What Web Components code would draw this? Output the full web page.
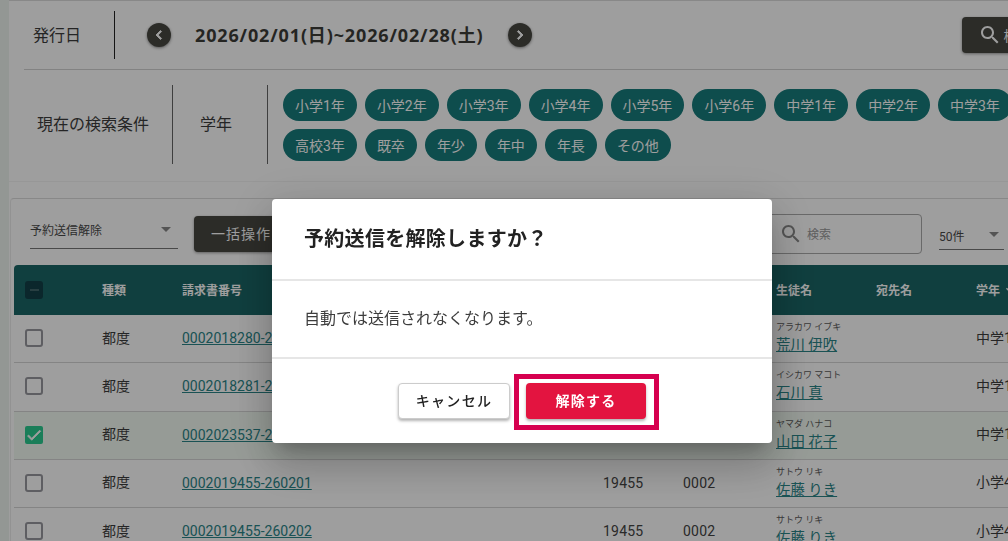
<!DOCTYPE html>
<html lang="ja"><head><meta charset="utf-8"><title>予約送信解除</title>
<style>
html,body{margin:0;height:541px;overflow:hidden;background:#eef4ef;font-family:Roboto,"Noto Sans CJK JP",sans-serif;color:#3d3d3d}
</style></head><body>
<app-page>
  <filter-card>
    <date-bar slot="date" label="発行日" range="2026/02/01(日)~2026/02/28(土)"></date-bar>
    <span slot="cond-label">現在の検索条件</span>
    <span slot="cond-name">学年</span>
    <filter-chip>小学1年</filter-chip><filter-chip>小学2年</filter-chip><filter-chip>小学3年</filter-chip><filter-chip>小学4年</filter-chip><filter-chip>小学5年</filter-chip><filter-chip>小学6年</filter-chip><filter-chip>中学1年</filter-chip><filter-chip>中学2年</filter-chip><filter-chip>中学3年</filter-chip><filter-chip>高校1年</filter-chip><filter-chip>高校2年</filter-chip><filter-chip>高校3年</filter-chip><filter-chip>既卒</filter-chip><filter-chip>年少</filter-chip><filter-chip>年中</filter-chip><filter-chip>年長</filter-chip><filter-chip>その他</filter-chip>
  </filter-card>
  <list-card>
    <list-toolbar></list-toolbar>
    <table-head></table-head>
    <data-row kind="都度" inv="0002018280-260201" kana="アラカワ イブキ" name="荒川 伊吹" grade="中学1年"></data-row>
    <data-row kind="都度" inv="0002018281-260201" kana="イシカワ マコト" name="石川 真" grade="中学1年"></data-row>
    <data-row selected kind="都度" inv="0002023537-260201" kana="ヤマダ ハナコ" name="山田 花子" grade="中学1年"></data-row>
    <data-row kind="都度" inv="0002019455-260201" no="19455" branch="0002" kana="サトウ リキ" name="佐藤 りき" grade="小学4年"></data-row>
    <data-row kind="都度" inv="0002019455-260202" no="19455" branch="0002" kana="サトウ リキ" name="佐藤 りき" grade="小学4年"></data-row>
  </list-card>
</app-page>
<modal-dialog heading="予約送信を解除しますか？">
  自動では送信されなくなります。
  <action-button slot="actions">キャンセル</action-button>
  <action-button slot="actions" danger highlighted>解除する</action-button>
</modal-dialog>
<script>
const ICON={
 search:'M15.5 14h-.79l-.28-.27C15.41 12.59 16 11.11 16 9.5 16 5.91 13.09 3 9.5 3S3 5.91 3 9.5 5.91 16 9.5 16c1.61 0 3.09-.59 4.23-1.57l.27.28v.79l5 4.99L20.49 19l-4.99-5zm-6 0C7.01 14 5 11.99 5 9.5S7.01 5 9.5 5 14 7.01 14 9.5 11.99 14 9.5 14z',
 left:'M15.41 7.41L14 6l-6 6 6 6 1.41-1.41L10.83 12z',
 right:'M10 6L8.59 7.41 13.17 12l-4.58 4.59L10 18l6-6z',
 down:'M16.59 8.59L12 13.17 7.41 8.59 6 10l6 6 6-6z'
};
const svg=(n,s,c,sw)=>`<svg width="${s}" height="${s}" viewBox="0 0 24 24" fill="${c}" style="display:block"><path d="${ICON[n]}"${sw?` stroke="${c}" stroke-width="${sw}"`:''}/></svg>`;
class Base extends HTMLElement{
  connectedCallback(){ if(!this.shadowRoot){this.attachShadow({mode:'open'}).innerHTML=this.render();} }
  a(n){return this.getAttribute(n)||''}
}
const def=(tag,fn)=>customElements.define(tag,class extends Base{render(){return fn(this)}});

def('app-page',()=>`<style>:host{display:block;box-sizing:border-box;width:1008px;height:541px;overflow:hidden;padding-left:9px}
.w{width:1400px;height:541px;background:#fff}</style><div class="w"><slot></slot></div>`);

def('filter-card',()=>`<style>
:host{display:block;box-sizing:border-box;width:1400px;height:182px;background:#fff;border-top:1px solid #dcdcdc;border-bottom:1px solid #f4f4f4}
.date{height:68px}
.cond{display:flex;align-items:center;margin-left:15px;border-top:1px solid #d2d2d2;height:111px;padding-bottom:1px;box-sizing:border-box}
.lab{box-sizing:border-box;height:79px;display:flex;align-items:center;font-size:16px;padding-bottom:3px}
.l1{width:148px;padding-left:13px}
.l2{width:95px;padding-left:27px;border-left:1px solid #666}
.chips{box-sizing:border-box;border-left:1px solid #666;height:79px;padding-left:15px;width:930px;display:flex;flex-wrap:wrap;gap:8px;align-content:center}
</style>
<div class="date"><slot name="date"></slot></div>
<div class="cond"><div class="lab l1"><slot name="cond-label"></slot></div><div class="lab l2"><slot name="cond-name"></slot></div><div class="chips"><slot></slot></div></div>`);

def('date-bar',e=>`<style>
:host{display:flex;align-items:center;height:68px;font-size:16px}
.l{box-sizing:border-box;width:106px;height:48px;padding:0 0 3px 24px;display:flex;align-items:center;border-right:1px solid #222}
.c{box-sizing:border-box;width:24px;height:24px;border-radius:50%;background:#484842;display:flex;align-items:center;justify-content:center;box-shadow:0 1px 3px rgba(0,0,0,.45)}
.p{margin-left:32px}
.r{font:700 18px/1 "Noto Sans","Noto Sans CJK JP",sans-serif;letter-spacing:.86px;margin:0 24px;color:#3c3c38;white-space:nowrap}
.s{margin-left:430px;width:110px;height:36px;box-sizing:border-box;border-radius:4px;background:#484842;display:flex;align-items:center;padding-left:16px;gap:2px;color:#fff;font-size:14px;box-shadow:0 1px 3px rgba(0,0,0,.4)}
</style><div class="l">${e.a('label')}</div>
<div class="c p">${svg('left',18,'#fff',1.2)}</div><div class="r">${e.a('range')}</div><div class="c">${svg('right',18,'#fff',1.2)}</div>
<div class="s">${svg('search',24,'#fff')}<span>検索</span></div>`);

def('filter-chip',()=>`<style>
:host{display:inline-flex;align-items:center;height:32px;padding:0 12px;border-radius:16px;background:#187c7c;color:#fff;font-size:14px;white-space:nowrap}
</style><slot></slot>`);

def('list-card',()=>`<style>
:host{display:block;box-sizing:border-box;width:1390px;height:400px;margin:16px 0 0 1px;background:#fff;border-top:1px solid #dcdcdc;border-left:1px solid #ececec;border-radius:4px 0 0 0}
</style><slot></slot>`);

def('list-toolbar',()=>`<style>
:host{display:flex;align-items:flex-start;height:66px;padding-left:19px;font-size:12px}
.sel{box-sizing:border-box;border-bottom:1px solid #777;display:flex;align-items:center;justify-content:space-between;color:#4a4a4a}
.a{width:148px;height:29px;margin-top:21px;padding-bottom:9px}
.btn{margin:17px 0 0 16px;box-sizing:border-box;width:96px;height:36px;border-radius:4px;background:#484842;color:#fff;font-size:14px;letter-spacing:1px;display:flex;align-items:center;padding:0 0 2px 17px;box-shadow:0 1px 3px rgba(0,0,0,.4)}
.search{box-sizing:border-box;margin:15px 0 0 472px;width:160px;height:40px;border:1px solid #aaa;border-radius:4px;display:flex;align-items:center;padding:0 0 1px 19px;gap:4px;color:#999}
.b{width:65px;height:27px;margin:24px 0 0 17px;padding-bottom:2px;align-items:center}
.tri{width:0;height:0;border:5px solid transparent;border-top-color:#888;border-bottom:0;margin-right:7px}
.b .tri{margin-right:5px;margin-top:-1px}
</style>
<div class="sel a"><span>予約送信解除</span><span class="tri"></span></div>
<div class="btn">一括操作</div>
<div class="search">${svg('search',24,'#888').replace('display:block','display:block;margin-left:-3px')}<span>検索</span></div>
<div class="sel b"><span>50件</span><span class="tri"></span></div>`);

const COLS='88px 80px 421px 80px 93px 100px 100px 200px';
const boxCss=`.box{box-sizing:border-box;width:18px;height:18px;margin-left:11px;border:2px solid #98989f;border-radius:3px;display:flex;align-items:center;justify-content:center}`;

def('table-head',()=>`<style>
:host{display:grid;grid-template-columns:${COLS};align-items:center;height:50px;margin-left:3px;background:#1a6666;border-radius:4px 0 0 0;color:#fff;font-size:12px;font-weight:700}
${boxCss}
.box{background:#124048;border:0;border-radius:3px}
.box i{display:block;width:9px;height:2px;background:#42666b}
.g{display:flex;align-items:center;gap:2px}
span{display:block;margin-top:-2px}
</style><div class="box"><i></i></div><div><span>種類</span></div><div><span>請求書番号</span></div><div></div><div></div><div><span>生徒名</span></div><div><span>宛先名</span></div><div class="g"><span>学年</span>${svg('down',16,'#fff')}</div>`);

def('data-row',e=>{
 const sel=e.hasAttribute('selected');
 return `<style>
:host{display:grid;grid-template-columns:${COLS};align-items:center;box-sizing:border-box;height:48.25px;margin-left:3px;border-bottom:1px solid #d6d6d6;font-size:14px;background:${sel?'#f3fbf3':'#fff'};color:#3d3d3d;padding-bottom:1px}
${boxCss}
.box.on{background:#2acb90;border:0;border-radius:2px}
a{color:#2a8588;text-decoration:underline}
.txt{margin-top:-3px}
.k{font-size:9px;line-height:12px;color:#5c5c5c;white-space:nowrap;margin-top:1px}
.n{display:block;line-height:20px;margin-top:3px;white-space:nowrap;font-size:14.4px}
.num{color:#444;font-size:14px;letter-spacing:.2px}
</style>
<div class="box${sel?' on':''}">${sel?`<svg width="18" height="18" viewBox="0 0 24 24" fill="#fff" stroke="#fff" stroke-width="1"><path d="M9 16.2 4.8 12l-1.4 1.4L9 19 21 7l-1.4-1.4z"/></svg>`:''}</div>
<div class="txt">${e.a('kind')}</div><div><a>${e.a('inv')}</a></div><div class="num">${e.a('no')}</div><div class="num">${e.a('branch')}</div>
<div><div class="k">${e.a('kana')}</div><a class="n">${e.a('name')}</a></div><div></div><div class="txt">${e.a('grade')}</div>`});

def('modal-dialog',e=>`<style>
:host{position:fixed;inset:0;background:rgba(0,0,0,.38);display:block;z-index:10}
.d{position:absolute;left:272px;top:199px;width:500px;height:244px;box-sizing:border-box;background:#fff;border-radius:4px;display:flex;flex-direction:column;color:#222;box-shadow:0 11px 15px -7px rgba(0,0,0,.2),0 24px 38px 3px rgba(0,0,0,.14),0 9px 46px 8px rgba(0,0,0,.12)}
.t{box-sizing:border-box;padding:0 32px 4px;display:flex;align-items:center;font-size:20px;font-weight:700;letter-spacing:.3px;border-bottom:2px solid #e6e6e6;flex:none;height:82px}
.b{flex:none;box-sizing:border-box;padding:0 32px 4px;display:flex;align-items:center;font-size:16px;color:#3d3d3d;border-bottom:2px solid #e6e6e6;height:78px}
.a{display:flex;justify-content:center;gap:16px;padding-top:24px}
</style><div class="d" role="dialog"><div class="t">${e.a('heading')}</div><div class="b"><slot></slot></div><div class="a"><slot name="actions"></slot></div></div>`);

def('action-button',e=>{
 const d=e.hasAttribute('danger');
 return `<style>
:host{position:relative;box-sizing:border-box;height:36px;width:${d?120:112}px;border-radius:4px;font-size:14px;font-weight:${d?700:500};letter-spacing:1.3px;display:flex;align-items:center;justify-content:center;padding-bottom:3px;
 background:${d?'#e31440':'#fff'};color:${d?'#fff':'#222'};${d?'':'border:1px solid #ccc;'}box-shadow:0 2px 3px rgba(0,0,0,.3)}
.hl{position:absolute;left:-12px;top:-9px;right:-13px;bottom:-11px;border:5px solid #d6004f;pointer-events:none}
</style><slot></slot>${e.hasAttribute('highlighted')?'<span class="hl"></span>':''}`});
</script>
</body></html>
